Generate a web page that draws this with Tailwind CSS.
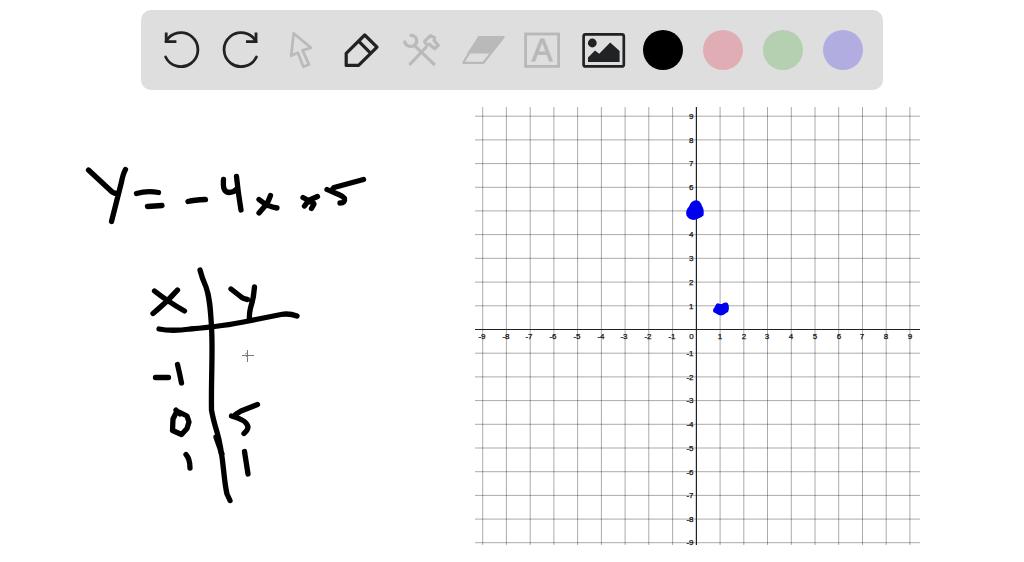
<!DOCTYPE html>
<html lang="en">
<head>
<meta charset="utf-8">
<meta name="viewport" content="width=device-width, initial-scale=1">
<title>Whiteboard</title>
<script src="https://cdn.jsdelivr.net/npm/@tailwindcss/browser@4"></script>
</head>
<body class="bg-white font-['Liberation_Sans',Arial,sans-serif]">
<header class="pt-[10px]">
  <div role="toolbar" aria-label="Drawing tools" class="mx-auto flex h-20 w-fit items-center rounded-[10px] bg-[#dedede] pr-5 pl-[10px]">
    <button type="button" aria-label="Undo" class="size-15 text-[#202224]">
      <svg viewBox="0 0 60 60" class="size-full" fill="none" stroke="currentColor" stroke-width="2.8" stroke-linecap="round"><path d="M14.600 37A17 17 0 1 0 15 21.500"/><path d="M15.200 12.400V21.600H25.400" stroke-linecap="butt"/></svg>
    </button>
    <button type="button" aria-label="Redo" class="size-15 text-[#202224]">
      <svg viewBox="0 0 60 60" class="size-full" fill="none" stroke="currentColor" stroke-width="2.8" stroke-linecap="round"><path d="M45.400 37A17 17 0 1 1 45 21.500"/><path d="M45 12.400V21.600H35" stroke-linecap="butt"/></svg>
    </button>
    <button type="button" aria-label="Select" class="size-15 text-[#bababa]">
      <svg viewBox="0 0 60 60" class="size-full" fill="none" stroke="currentColor" stroke-width="2.7" stroke-linejoin="round"><path d="M22.6 13.4L40 27.8L31.6 30.4L38 44.6L32.4 46.8L26.8 32.6L20.2 35.8Z"/></svg>
    </button>
    <button type="button" aria-label="Pencil" class="size-15 text-[#202224]">
      <svg viewBox="0 0 60 60" class="size-full" fill="none" stroke="currentColor" stroke-width="3.2" stroke-linejoin="round"><path d="M33.7 15L46 27.2L27.6 45.4H15.2V33.4ZM27.6 21.2L39.8 33.4"/></svg>
    </button>
    <button type="button" aria-label="Tools" class="size-15 text-[#bababa]">
      <svg viewBox="0 0 60 60" class="size-full" fill="none" stroke="currentColor" stroke-width="3.2" stroke-linejoin="round"><path d="M18.3 45L35.8 26.5M43.8 45L23.6 25.6"/><path d="M18.600 15.600C23 14.600 26.400 17.600 25.600 22.600L22.600 26C18 27.200 14 25.600 13.600 20.600"/><path d="M33.6 21.4L39.4 15.6L43.600 17.600L43 20.4L47.4 25.4L43.6 28.8L38.4 24.2L35.8 25Z"/></svg>
    </button>
    <button type="button" aria-label="Eraser" class="size-15 text-[#b9b9ba]">
      <svg viewBox="0 0 60 60" class="size-full" fill="none" stroke="currentColor" stroke-width="2.2" stroke-linejoin="round"><path d="M28 17H52.6L32.4 42.8H12.2Z"/><path d="M28 16H53.4L39.6 33.4H16Z" fill="currentColor" stroke="none"/></svg>
    </button>
    <button type="button" aria-label="Text" class="size-15 text-[#b8b8b8]">
      <svg viewBox="0 0 60 60" class="size-full" fill="none" stroke="currentColor" stroke-width="2.8"><rect x="14.6" y="14" width="33" height="32.4"/><text x="31" y="41" text-anchor="middle" font-size="31" fill="currentColor" stroke-width="0.8">A</text></svg>
    </button>
    <button type="button" aria-label="Insert image" class="size-15 text-[#202224]">
      <svg viewBox="0 0 60 60" class="size-full" fill="none" stroke="currentColor" stroke-width="2.7"><rect x="12.6" y="14.4" width="40.2" height="32" rx="2"/><circle cx="21.3" cy="23" r="4.4" fill="currentColor" stroke="none"/><path d="M17 42V37.4L24 30.6L28.2 33.8L39.2 22.6L48.6 31V42Z" fill="currentColor" stroke="none"/></svg>
    </button>
    <div role="radiogroup" aria-label="Pen colour" class="ml-3 flex gap-5">
      <input type="radio" name="pen" checked aria-label="Black" class="size-10 appearance-none rounded-full bg-black">
      <input type="radio" name="pen" aria-label="Red" class="size-10 appearance-none rounded-full bg-[#e1adb4]">
      <input type="radio" name="pen" aria-label="Green" class="size-10 appearance-none rounded-full bg-[#b4d0b1]">
      <input type="radio" name="pen" aria-label="Blue" class="size-10 appearance-none rounded-full bg-[#b2ade1]">
    </div>
  </div>
</header>
<main class="grid grid-cols-[464fr_560fr]">
  <svg viewBox="0 90 464 472" class="w-full" role="img" aria-label="Handwritten y = -4x + 5 and a table of x and y values" fill="none" stroke="#000" stroke-width="5.3" stroke-linecap="round" stroke-linejoin="round">
    <!-- equation -->
    <path d="M88.5 170L110 190Q113 193.500 117 193.500M125.500 169.500Q123 174 121.500 182L111.500 221.500"/>
    <path d="M136.500 193.500Q147 190.500 158.500 192.500M147.500 206.500L162 205.500M188 201.500Q194 200 205.500 199.500"/>
    <path d="M223.500 179.500C223 187 223.500 192 229 192.500Q234 192.500 236.500 189M236.500 176.500Q238 192 241 210"/>
    <path d="M259 199.500Q268 207 277 208M270.500 195.500Q269 201 265 206L259 213"/>
    <path d="M303 197.500L308.500 200.500L317.500 196.500M308.500 200.500L304.500 206M309 202L312.500 201.500L314 204L311.500 208.500"/>
    <path d="M363.500 179.500L334 187.500L332 190M327 189.500C336 194 342 194.500 344.500 198.500Q345.500 203 340 203"/>
    <!-- table rules -->
    <path d="M200 270Q202 278 206 287C210 298 210.500 310 211.500 327C213 350 211 378 211.500 410Q213 419 217 432C224 455 223 478 227 494L230 500.500M216 437L222 454M218 438L221 453"/>
    <path d="M159 329Q172 331.500 190 329C213 327 230 325 246 321.500L281 314.500Q289 313 297 316"/>
    <!-- column heads -->
    <path d="M154.500 291Q167 301 184.500 311M177.500 290Q167 302 153 313.500M231 289L240 296Q243 299 247.500 299.500M254.500 287C254 295 252.500 302 250.500 308Q249 314 249.500 320"/>
    <!-- values -->
    <path d="M155.500 377.500H168.500M177.500 364.500Q180 375 181.500 383"/>
    <path d="M177 411L173 419L172.500 430.500L181.500 434.500L187 428.500L189 422L187 416L179 412M176 410L180 414"/>
    <path d="M257.500 404.500L241 411L235.500 414.500M231.500 416C239 418 247 421 248 427Q248 430 244 433.500"/>
    <path d="M186 454.500Q190 459 190 468M244.500 451.500L248 474"/>
    <!-- crosshair pointer -->
    <g stroke="#777" stroke-width="1" stroke-linecap="butt"><path d="M242 355.500H254M247.500 350V362"/><path d="M245 354L247 353M246 356L248 358" stroke="#999"/></g>
  </svg>
  <svg viewBox="464 90 560 472" class="w-full" role="img" aria-label="Coordinate grid with points at (0, 5) and (1, 1)" fill="none">
    <path stroke="#000" stroke-opacity="0.33" stroke-width="1" d="M482.700 107V545M506.400 107V545M530.200 107V545M553.900 107V545M577.600 107V545M601.400 107V545M625.100 107V545M648.800 107V545M672.600 107V545M720.100 107V545M743.800 107V545M767.500 107V545M791.300 107V545M815 107V545M838.700 107V545M862.500 107V545M886.200 107V545M909.900 107V545M475 116.200H920M475 139.900H920M475 163.600H920M475 187.300H920M475 210.900H920M475 234.600H920M475 258.300H920M475 282.100H920M475 305.800H920M475 353.200H920M475 376.900H920M475 400.600H920M475 424.300H920M475 448H920M475 471.700H920M475 495.400H920M475 519.100H920M475 542.700H920"/>
    <path stroke="#222" stroke-width="1.200" d="M696.400 107V545M475 329.500H920"/>
    <g fill="#111" stroke="#111" stroke-width="0.25" font-size="8" text-anchor="middle">
      <text x="482" y="339">-9</text><text x="506" y="339">-8</text><text x="529" y="339">-7</text><text x="553" y="339">-6</text><text x="577" y="339">-5</text><text x="601" y="339">-4</text><text x="624" y="339">-3</text><text x="648" y="339">-2</text><text x="672" y="339">-1</text><text x="691.500" y="339">0</text><text x="720" y="339">1</text><text x="744" y="339">2</text><text x="767" y="339">3</text><text x="791" y="339">4</text><text x="815" y="339">5</text><text x="839" y="339">6</text><text x="862" y="339">7</text><text x="886" y="339">8</text><text x="910" y="339">9</text>
    </g>
    <g fill="#111" stroke="#111" stroke-width="0.25" font-size="8" text-anchor="end">
      <text x="693.500" y="119">9</text><text x="693.500" y="143">8</text><text x="693.500" y="166">7</text><text x="693.500" y="190">6</text><text x="693.500" y="237">4</text><text x="693.500" y="261">3</text><text x="693.500" y="285">2</text><text x="693.500" y="309">1</text><text x="693.500" y="356">-1</text><text x="693.500" y="380">-2</text><text x="693.500" y="403">-3</text><text x="693.500" y="427">-4</text><text x="693.500" y="451">-5</text><text x="693.500" y="475">-6</text><text x="693.500" y="498">-7</text><text x="693.500" y="522">-8</text><text x="693.500" y="545">-9</text>
    </g>
    <g fill="#0000f0">
      <path d="M696 200.300C699.500 200.500 701 203 702 206C704 209 704 212 703.500 215.500C701 217.500 698 219 695 219.800C691 220.300 688 218.500 686.500 215.500C685.500 212 686.500 209 689 206.500C690.500 202.500 692.500 200.500 696 200.300Z"/>
      <path d="M717.500 303.200C719 303 720 304.500 722 304C724 302.300 727 302 728 303.500C729.500 306.500 729 310 728 312C725 313.500 724 315 721 315.500C718 315.500 716.500 313 714 312.500C712.500 311.500 712.800 309 714.500 307.500C715.500 306 715.500 304 717.500 303.200Z"/>
    </g>
  </svg>
</main>
</body>
</html>
